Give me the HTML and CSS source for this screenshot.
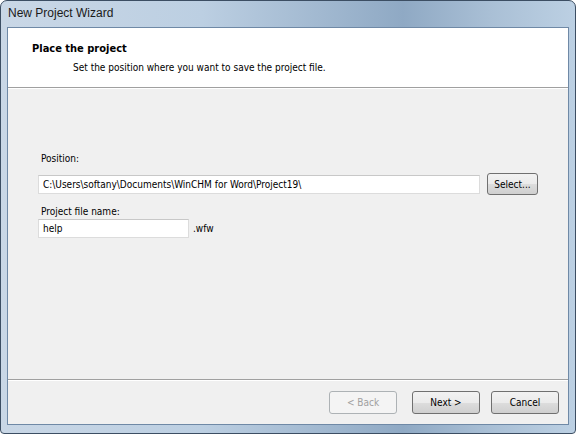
FILE: index.html
```html
<!DOCTYPE html>
<html>
	<head>
		<title>New Project Wizard</title>
		<link rel="stylesheet" href="styles.css">
	</head>
	<body>
		<div class="janela">
			<div class="titulo">New Project Wizard</div>

			<div class="cliente">
				<div class="cabecalho">
					<div class="cab-titulo">Place the project</div>
					<div class="cab-sub">Set the position where you want to save the project file.</div>
				</div>

				<div class="corpo">
					<div class="rotulo">Position:</div>
					<div class="linha">
						<input class="campo campo-longo" value="C:\Users\softany\Documents\WinCHM for Word\Project19\">
						<button class="botao botao-select">Select...</button>
					</div>

					<div class="rotulo rotulo-2">Project file name:</div>
					<div class="linha">
						<input class="campo campo-curto" value="help">
						<span class="ext">.wfw</span>
					</div>
				</div>

				<div class="rodape">
					<button class="botao botao-back" disabled>&lt; Back</button>
					<button class="botao">Next &gt;</button>
					<button class="botao botao-cancel">Cancel</button>
				</div>
			</div>
		</div>
	</body>
</html>
```

FILE: styles.css
```css
body {
    margin: 0;
    font-family: "DejaVu Sans Condensed", "Liberation Sans", Arial, sans-serif;
    font-size: 10px;
    color: #000;
    background: #fff;
}
.janela {
    width: 576px;
    height: 434px;
    box-sizing: border-box;
    border: 1px solid #3c4e63;
    border-radius: 7px 7px 4px 4px;
    background: linear-gradient(90deg, #c9d7e6 0%, #bccfe2 35%, #8fa9c4 70%, #a9bfd5 85%, #bcd0e3 100%);
    padding: 0 6px 8px 6px;
    display: flex;
    flex-direction: column;
}
.titulo {
    height: 26px;
    line-height: 25px;
    padding-left: 1px;
    font-family: "Liberation Sans", Arial, sans-serif;
    font-size: 12px;
    color: #1a1a1a;
}
.cliente {
    flex: 1;
    display: flex;
    flex-direction: column;
    background: #f0f0f0;
    border: 1px solid #6f89a6;
}
.cabecalho {
    height: 59px;
    background: #fff;
    border-bottom: 1px solid #a0a0a0;
    box-shadow: 0 1px 0 #fff;
}
.cab-titulo {
    font-weight: bold;
    font-size: 11px;
    margin: 14px 0 0 24px;
}
.cab-sub {
    margin: 7px 0 0 65px;
}
.corpo {
    flex: 1;
    padding: 65px 0 0 30px;
}
.rotulo {
    margin: 0 0 9px 3px;
}
.rotulo-2 {
    margin-top: 11px;
    margin-bottom: 2px;
}
.linha {
    display: flex;
    align-items: center;
}
.campo {
    height: 19px;
    box-sizing: border-box;
    border: 1px solid #dcdcdc;
    border-top-color: #c8c8c8;
    background: #fff;
    font-family: "DejaVu Sans Condensed", "Liberation Sans", Arial, sans-serif;
    font-size: 10px;
    padding: 0 4px;
    margin: 0;
}
.campo-longo {
    width: 442px;
}
.campo-curto {
    width: 151px;
}
.ext {
    margin-left: 4px;
}
.botao {
    width: 68px;
    height: 23px;
    box-sizing: border-box;
    border: 1px solid #707070;
    border-radius: 3px;
    background: linear-gradient(#f2f2f2 0%, #ebebeb 50%, #dddddd 51%, #cfcfcf 100%);
    font-family: "DejaVu Sans Condensed", "Liberation Sans", Arial, sans-serif;
    font-size: 10px;
    color: #000;
    padding: 0;
}
.botao[disabled] {
    border-color: #adb2b5;
    background: #f4f4f4;
    color: #a0a0a0;
}
.botao-back {
    margin-right: 4px;
}
.botao-select {
    width: 51px;
    height: 22px;
    margin-left: 7px;
}
.rodape {
    height: 45px;
    box-sizing: border-box;
    border-top: 1px solid #a0a0a0;
    box-shadow: inset 0 1px 0 #fff;
    display: flex;
    justify-content: flex-end;
    align-items: flex-start;
    gap: 11px;
    padding: 11px 9px 0 0;
}
```
